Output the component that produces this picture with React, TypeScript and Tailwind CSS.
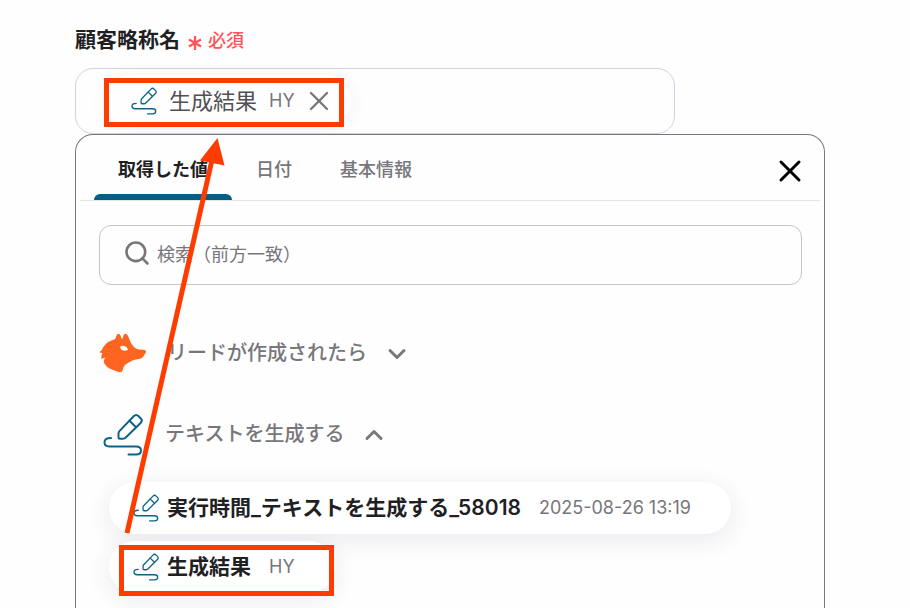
import { useState } from 'react'
import { ChevronDown, ChevronUp, Search, X } from 'lucide-react'

const tabs = ['取得した値', '日付', '基本情報']

function PenIcon({ className }: { className: string }) {
  return (
    <svg
      viewBox="0 0 40 43"
      fill="none"
      stroke="currentColor"
      strokeWidth="2"
      strokeLinecap="round"
      strokeLinejoin="round"
      aria-hidden="true"
      className={`shrink-0 text-[#0b6488] ${className}`}
    >
      <path d="M8 25C3.5 25 1.5 27 1.5 29.2c0 2.8 2.2 4.2 5 4.2H33c3.4 0 5 1.6 5 4s-1.6 4-5 4h-7.5" />
      <path d="M15.5 20.5c0-1 .2-1.6.9-2.4L30.7 3.2c1.5-1.5 3.4-1.5 4.9 0l2 2c1.5 1.5 1.5 3.3 0 4.8L22.8 24.5c-.8.8-1.6 1.2-2.7 1.2H17c-1 0-1.5-.5-1.5-1.5z" />
      <path d="m26.5 7.8 6.5 6.5" />
    </svg>
  )
}

function FoxIcon() {
  return (
    <svg viewBox="10 20 144 120" aria-hidden="true" className="h-10 w-12 shrink-0">
      <path
        fill="#ff6420"
        d="M11 77C19 74 20 66 25 59C32 49 44 43 57 39C62 35 61 22 69 22C75 23 75 32 79 38C83 36 82 22 89 22C96 22 99 33 102 41C107 54 114 64 124 68C132 70 140 70 147 71C153 73 152 79 147 84C144 90 141 96 134 97C118 98 108 103 102 107C92 112 86 117 83 124C81 133 79 139 71 138C54 132 38 127 30 117C23 107 23 101 29 94C24 94 20 96 18 99C16 92 17 87 20 80C17 80 14 79 11 77Z"
      />
      <path fill="#fff" d="M73 61C82 55 95 60 97 71C86 76 75 73 73 61Z" />
    </svg>
  )
}

function ValueChip({ name, sample }: { name: string; sample: string }) {
  return (
    <button
      type="button"
      className="flex h-[52px] items-center rounded-full bg-white pr-10 pl-6 shadow-[0_6px_24px_rgba(60,40,80,0.10)]"
    >
      <PenIcon className="h-7 w-[26px]" />
      <span className="ml-2 text-[21px] font-semibold text-[#1f1f24]">{name}</span>
      <span className="ml-[18px] text-lg text-[#77767b]">{sample}</span>
    </button>
  )
}

export default function App() {
  const [tab, setTab] = useState(tabs[0])

  return (
    <main className="relative flex min-h-screen flex-col overflow-hidden bg-[#fefefe] pt-6 pr-[85px] pl-[75px] font-[Inter,'Noto_Sans_CJK_JP',sans-serif] text-[#1f1f24]">
      <h1 className="flex h-8 items-center text-[21px] font-semibold">
        顧客略称名
        <svg viewBox="0 0 14 14" aria-hidden="true" className="mt-1.5 ml-2 size-[14px] text-[#ff5459]">
          <path d="M7 0v14M1 3.5l12 7M13 3.5l-12 7" stroke="currentColor" strokeWidth="2.25" />
        </svg>
        <span className="mt-0.5 ml-1.5 text-lg font-medium text-[#ff5459]">必須</span>
      </h1>

      <div className="mt-3 flex h-[66px] w-4/5 items-center rounded-[18px] border border-[#cfd3e2] pl-[30px]">
        <div className="flex h-[52px] items-center rounded-full pr-4 pl-[25px] shadow-[0_2px_20px_rgba(60,40,80,0.06)]">
          <PenIcon className="h-7 w-[26px]" />
          <span className="ml-3 text-[22px] text-[#505055]">生成結果</span>
          <span className="ml-3 text-lg text-[#77767b]">HY</span>
          <button type="button" aria-label="削除" className="ml-2 text-[#77767b]">
            <X className="size-8" strokeWidth={1.75} />
          </button>
        </div>
      </div>

      <section className="flex-1 rounded-t-[18px] border border-b-0 border-[#77767b] bg-[#fefefe]">
        <div className="mx-1 flex h-[66px] border-b border-[#e6e5ea] pl-[14px]">
          <div role="tablist" className="flex flex-1">
            {tabs.map((item) => (
              <button
                key={item}
                type="button"
                role="tab"
                aria-selected={item === tab}
                onClick={() => setTab(item)}
                className={`relative px-6 pt-1 text-lg ${item === tab ? 'font-semibold text-[#1f1f24]' : 'font-medium text-[#77767b]'}`}
              >
                {item}
                {item === tab && <span className="absolute inset-x-0 bottom-0 h-1.5 rounded-t-md bg-[#005f86]" />}
              </button>
            ))}
          </div>
          <button type="button" aria-label="閉じる" className="mt-1.5 mr-3 text-black">
            <X className="size-9" strokeWidth={2} />
          </button>
        </div>

        <div className="pt-6 pr-[22px] pl-[23px]">
          <label className="flex h-[60px] items-center rounded-xl border border-[#c5c4c9] pl-[23px]">
            <Search className="mb-1 size-7 text-[#77767b]" strokeWidth={2.25} />
            <input
              type="search"
              aria-label="検索"
              placeholder="検索（前方一致）"
              className="ml-1.5 min-w-0 flex-1 bg-transparent text-lg outline-none placeholder:text-[#77767b]"
            />
          </label>

          <button type="button" aria-expanded="false" className="mt-12 flex h-10 items-center text-[#77767b]">
            <FoxIcon />
            <span className="ml-5 text-xl font-medium">リードが作成されたら</span>
            <ChevronDown className="mt-0.5 ml-4 size-7" strokeWidth={2.5} />
          </button>
          <button type="button" aria-expanded="true" className="mt-10 flex h-[42px] items-center text-[#77767b]">
            <span className="flex w-12 justify-center">
              <PenIcon className="h-[43px] w-10" />
            </span>
            <span className="ml-[18px] text-xl font-medium">テキストを生成する</span>
            <ChevronUp className="mt-0.5 ml-4 size-7" strokeWidth={2.5} />
          </button>

          <div className="mt-[27px] ml-[10px] flex flex-col items-start gap-[7px]">
            <ValueChip name="実行時間_テキストを生成する_58018" sample="2025-08-26 13:19" />
            <ValueChip name="生成結果" sample="HY" />
          </div>
        </div>
      </section>

      <div className="pointer-events-none absolute top-[78px] left-[104px] h-[49px] w-60 border-5 border-[#ff3c00]" />
      <div className="pointer-events-none absolute top-[545px] left-[119px] h-[51px] w-[215px] border-5 border-[#ff3c00]" />
      <svg viewBox="0 0 110 400" aria-hidden="true" className="pointer-events-none absolute top-[136px] left-[120px] h-[400px] w-[110px]">
        <path d="M7 397 92 24" stroke="#ff3c00" strokeWidth="5" />
        <path d="M97.5 2 80 24.5l24.5 5z" fill="#ff3c00" />
      </svg>
    </main>
  )
}
